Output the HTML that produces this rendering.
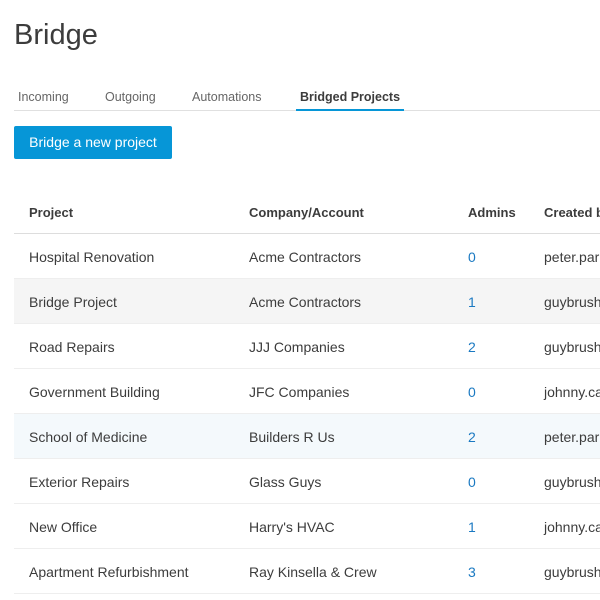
<!DOCTYPE html>
<html><head><style>
body{margin:0;width:600px;height:600px;overflow:hidden;background:#fff;font-family:"Liberation Sans",sans-serif;color:#3c3c3c;position:relative}
.t{position:absolute;left:14px;top:19px;font-size:29px;color:#3c3c3c}
.tabs{position:absolute;left:14px;top:86px;right:0;height:24px;border-bottom:1px solid #e0e0e0}
.tab{position:absolute;top:4px;font-size:12.5px;color:#666}
.tab.a{color:#3c3c3c;font-weight:bold;border-bottom:2px solid #0696d7;padding:0 4px 5px;top:4px;font-size:12.5px}
.btn{position:absolute;left:14px;top:126px;width:158px;height:33px;background:#0696d7;color:#fff;font-size:14px;line-height:33px;text-align:center;border-radius:2px}
.tbl{position:absolute;left:14px;top:189px;width:620px}
.r{height:44px;border-bottom:1px solid #eee;position:relative;font-size:14px}
.r span{position:absolute;top:15px}
.h{font-weight:bold;border-bottom:1px solid #ddd;font-size:13px}
.h span{top:16px}
.c1{left:15px}.c2{left:235px}.c3{left:454px}.c4{left:530px}
.n{color:#1a79c2}
</style></head><body>
<div class="t">Bridge</div>
<div class="tabs">
<span class="tab" style="left:4px">Incoming</span>
<span class="tab" style="left:91px">Outgoing</span>
<span class="tab" style="left:178px">Automations</span>
<span class="tab a" style="left:282px">Bridged Projects</span>
</div>
<div class="btn">Bridge a new project</div>
<div class="tbl">
<div class="r h"><span class="c1">Project</span><span class="c2">Company/Account</span><span class="c3">Admins</span><span class="c4">Created by</span></div>
<div class="r"><span class="c1">Hospital Renovation</span><span class="c2">Acme Contractors</span><span class="c3 n">0</span><span class="c4">peter.parker</span></div>
<div class="r" style="background:#f5f5f5"><span class="c1">Bridge Project</span><span class="c2">Acme Contractors</span><span class="c3 n">1</span><span class="c4">guybrush</span></div>
<div class="r"><span class="c1">Road Repairs</span><span class="c2">JJJ Companies</span><span class="c3 n">2</span><span class="c4">guybrush</span></div>
<div class="r"><span class="c1">Government Building</span><span class="c2">JFC Companies</span><span class="c3 n">0</span><span class="c4">johnny.cash</span></div>
<div class="r" style="background:#f4f9fc"><span class="c1">School of Medicine</span><span class="c2">Builders R Us</span><span class="c3 n">2</span><span class="c4">peter.parker</span></div>
<div class="r"><span class="c1">Exterior Repairs</span><span class="c2">Glass Guys</span><span class="c3 n">0</span><span class="c4">guybrush</span></div>
<div class="r"><span class="c1">New Office</span><span class="c2">Harry's HVAC</span><span class="c3 n">1</span><span class="c4">johnny.cash</span></div>
<div class="r"><span class="c1">Apartment Refurbishment</span><span class="c2">Ray Kinsella &amp; Crew</span><span class="c3 n">3</span><span class="c4">guybrush</span></div>
</div>
</body></html>
